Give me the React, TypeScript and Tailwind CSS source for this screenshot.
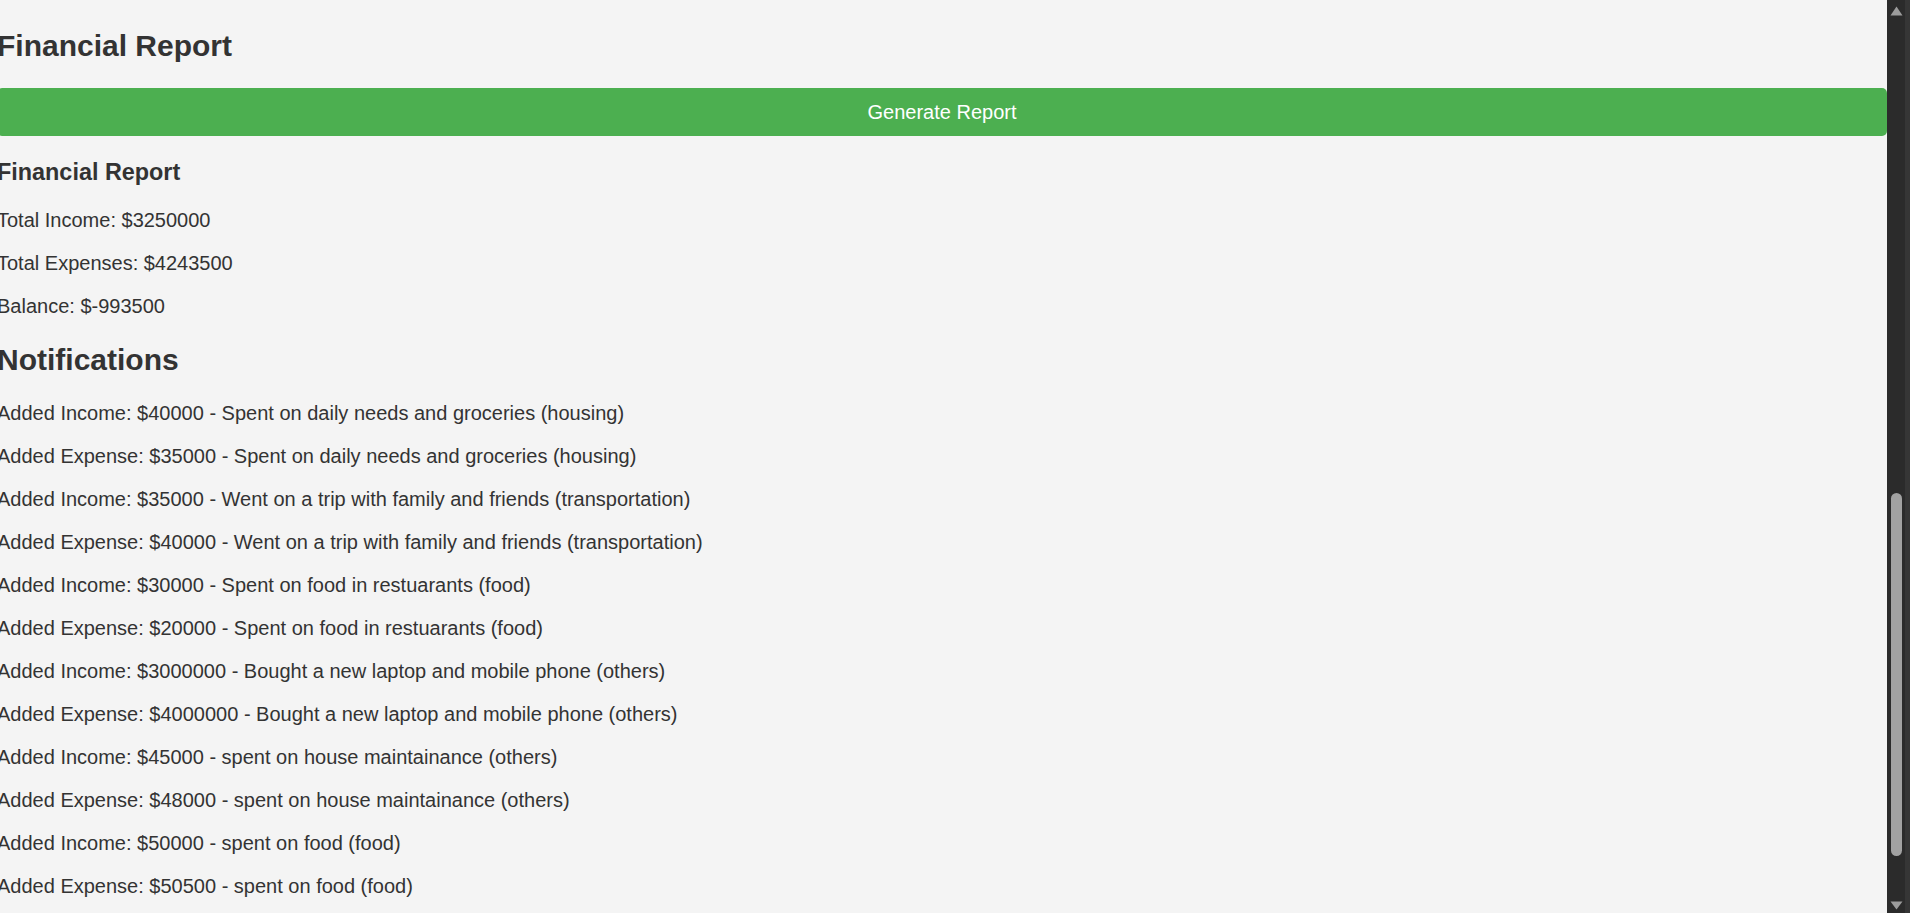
import React from "react";

const notifications = [
  "Added Income: $40000 - Spent on daily needs and groceries (housing)",
  "Added Expense: $35000 - Spent on daily needs and groceries (housing)",
  "Added Income: $35000 - Went on a trip with family and friends (transportation)",
  "Added Expense: $40000 - Went on a trip with family and friends (transportation)",
  "Added Income: $30000 - Spent on food in restuarants (food)",
  "Added Expense: $20000 - Spent on food in restuarants (food)",
  "Added Income: $3000000 - Bought a new laptop and mobile phone (others)",
  "Added Expense: $4000000 - Bought a new laptop and mobile phone (others)",
  "Added Income: $45000 - spent on house maintainance (others)",
  "Added Expense: $48000 - spent on house maintainance (others)",
  "Added Income: $50000 - spent on food (food)",
  "Added Expense: $50500 - spent on food (food)",
];

function Scrollbar() {
  return (
    <div className="flex h-full w-[23px] shrink-0">
      <div className="flex h-full w-[18px] flex-col items-center bg-[#2b2b2b]">
        <svg className="mt-[6px] shrink-0" width="13" height="10" viewBox="0 0 13 10">
          <polygon points="6.5,0.5 12.5,9.5 0.5,9.5" fill="#9c9c9c" />
        </svg>
        <div className="mt-[477px] h-[363px] w-[11px] shrink-0 rounded-full bg-[#a2a2a2]" />
        <svg className="mt-[45px] shrink-0" width="13" height="9" viewBox="0 0 13 9">
          <polygon points="0.5,0.5 12.5,0.5 6.5,8.5" fill="#9c9c9c" />
        </svg>
      </div>
      <div className="h-full w-[5px] bg-[#363636]" />
    </div>
  );
}

export default function App() {
  return (
    <div
      className="flex h-[913px] w-full overflow-hidden bg-[#f4f4f4] text-[#333333]"
      style={{ fontFamily: '"Liberation Sans", Arial, sans-serif' }}
    >
      <main className="min-w-0 flex-1">
        <div className="ml-[-3px] pt-[29px]">
          <h2 className="text-[30px] font-bold leading-[34px]">Financial Report</h2>
          <button className="mt-[25px] flex h-[48px] w-full items-center justify-center rounded-[5px] bg-[#4caf50] text-[20px] leading-[23px] text-white">
            Generate Report
          </button>
          <h3 className="mt-[23px] text-[23.4px] font-bold leading-[27px]">Financial Report</h3>
          <div className="mt-[23px] flex flex-col gap-[20px] text-[20px] leading-[23px]">
            <p>Total Income: $3250000</p>
            <p>Total Expenses: $4243500</p>
            <p>Balance: $-993500</p>
          </div>
          <h2 className="mt-[25px] text-[30px] font-bold leading-[34px]">Notifications</h2>
          <ul className="mt-[25px] flex flex-col gap-[20px] text-[20px] leading-[23px]">
            {notifications.map((n, i) => (
              <li key={i}>{n}</li>
            ))}
          </ul>
        </div>
      </main>
      <Scrollbar />
    </div>
  );
}
